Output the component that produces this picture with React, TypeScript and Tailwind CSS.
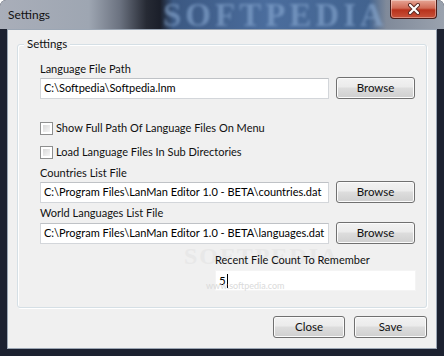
const font = { fontFamily: "Lato, 'Liberation Sans', sans-serif" };

const Button = ({ label, className = '' }: { label: string; className?: string }) => (
  <div
    className={`flex items-center justify-center h-[22px] rounded-[3px] border border-[#707070] bg-[linear-gradient(#f2f2f2,#ebebeb_45%,#dddddd_50%,#cfcfcf)] shadow-[inset_0_0_0_1px_#fbfbfb] text-[11.5px] text-[#111] ${className}`}
  >
    {label}
  </div>
);

const PathRow = ({ value }: { value: string }) => (
  <div className="flex items-center gap-[7px] h-[22px]">
    <div className="flex items-center w-[289px] h-[21px] bg-white border border-[#d3d6da] border-t-[#bfc2c6] pl-[3px] text-[11px] text-black whitespace-nowrap overflow-hidden">
      {value}
    </div>
    <Button label="Browse" className="w-[79px]" />
  </div>
);

const Checkbox = ({ label, className = '' }: { label: string; className?: string }) => (
  <div className={`flex items-center gap-[3px] h-[16px] ${className}`}>
    <div className="w-[13px] h-[13px] border border-[#8e8f8f] bg-white p-[2px]">
      <div className="w-full h-full bg-[linear-gradient(135deg,#d8d8d8,#f6f6f6)]" />
    </div>
    <span className="text-[11px] text-[#111]">{label}</span>
  </div>
);

export default function App() {
  return (
    <div style={font} className="relative w-[444px] h-[356px] overflow-hidden bg-[#1c2130] rounded-t-[6px] flex flex-col">
      {/* title bar */}
      <div className="relative flex h-[29px] bg-[linear-gradient(90deg,#a9aeb9_0%,#9ea6b2_20%,#6b7280_27%,#262a34_33%,#1b1f2a_36%,#3b5882_39%,#4b6d9d_60%,#42638f_83%,#808a9a_87%,#9aa2ae_100%)]">
        <span className="pl-[8px] pt-[7px] text-[12px] leading-[16px] text-[#111]">Settings</span>
        <span
          className="absolute left-[163px] top-[2px] text-[33px] leading-[26px] font-bold tracking-[4px] text-[#8cacd4] opacity-60 blur-[1.4px]"
          style={{ fontFamily: "'Liberation Serif', serif" }}
        >
          SOFTPEDIA
        </span>
        <div className="ml-auto mr-[7px] w-[47px] h-[19px] rounded-b-[4px] border border-[#4a1d1a] border-t-0 bg-[linear-gradient(#e6a595,#d06a55_45%,#b8321c_55%,#c8523a)] shadow-[inset_0_0_0_1px_rgba(255,255,255,0.35)] flex items-center justify-center">
          <svg width="14" height="12" viewBox="0 0 14 12">
            <path d="M3 2 L11 10 M11 2 L3 10" stroke="#5a2a24" strokeWidth="4" strokeLinecap="round" />
            <path d="M3 2 L11 10 M11 2 L3 10" stroke="#ffffff" strokeWidth="2.2" strokeLinecap="round" />
          </svg>
        </div>
      </div>

      {/* client area */}
      <div className="flex-1 flex px-[7px] pb-[7px]">
        <div className="relative flex-1 flex flex-col border border-[#9ba6b4] bg-[#f0f0f0]">
          {/* group box */}
          <div className="relative mt-[14px] mx-[9px] h-[264px] border border-[#d5dfe5] rounded-[3px] shadow-[inset_1px_1px_0_#ffffff,1px_1px_0_#ffffff] flex flex-col pl-[22px]">
            {/* watermark */}
            <span
              className="absolute left-[166px] top-[198px] text-[24px] leading-[26px] font-bold tracking-[2px] text-[#e8e8e8]"
              style={{ fontFamily: "'Liberation Serif', serif" }}
            >
              SOFTPEDIA
            </span>

            <span className="absolute left-[6px] top-[-9px] bg-[#f0f0f0] px-[3px] text-[11.5px] leading-[16px] text-[#111]">
              Settings
            </span>

            <div className="mt-[16px] h-[16px] leading-[16px] text-[11px] text-[#111]">Language File Path</div>
            <PathRow value="C:\Softpedia\Softpedia.lnm" />

            <Checkbox label="Show Full Path Of Language Files On Menu" className="mt-[21px]" />
            <Checkbox label="Load Language Files In Sub Directories" className="mt-[8px]" />

            <div className="mt-[5px] h-[16px] leading-[16px] text-[11px] text-[#111]">Countries List File</div>
            <PathRow value="C:\Program Files\LanMan Editor 1.0 - BETA\countries.dat" />

            <div className="mt-[2px] h-[16px] leading-[16px] text-[11px] text-[#111]">World Languages List File</div>
            <div className="mt-[1px]">
              <PathRow value="C:\Program Files\LanMan Editor 1.0 - BETA\languages.dat" />
            </div>

            <div className="relative ml-[175px] mt-[8px] h-[16px] leading-[16px] text-[11px] text-[#111]">Recent File Count To Remember</div>
            <div className="relative ml-[175px] mt-[2px] w-[201px] h-[21px] bg-white border border-[#f4f4f4] flex items-center pl-[3px] text-[11.5px] text-black">
              5<span className="ml-[1px] w-px h-[14px] bg-black" />
              <span className="absolute left-[-10px] top-[10px] text-[9px] leading-[10px] text-[#dadada]">www.softpedia.com</span>
            </div>
          </div>

          {/* buttons */}
          <div className="mt-[8px] flex justify-end gap-[9px] pr-[9px]">
            <Button label="Close" className="w-[72px]" />
            <Button label="Save" className="w-[73px]" />
          </div>
        </div>
      </div>
    </div>
  );
}
